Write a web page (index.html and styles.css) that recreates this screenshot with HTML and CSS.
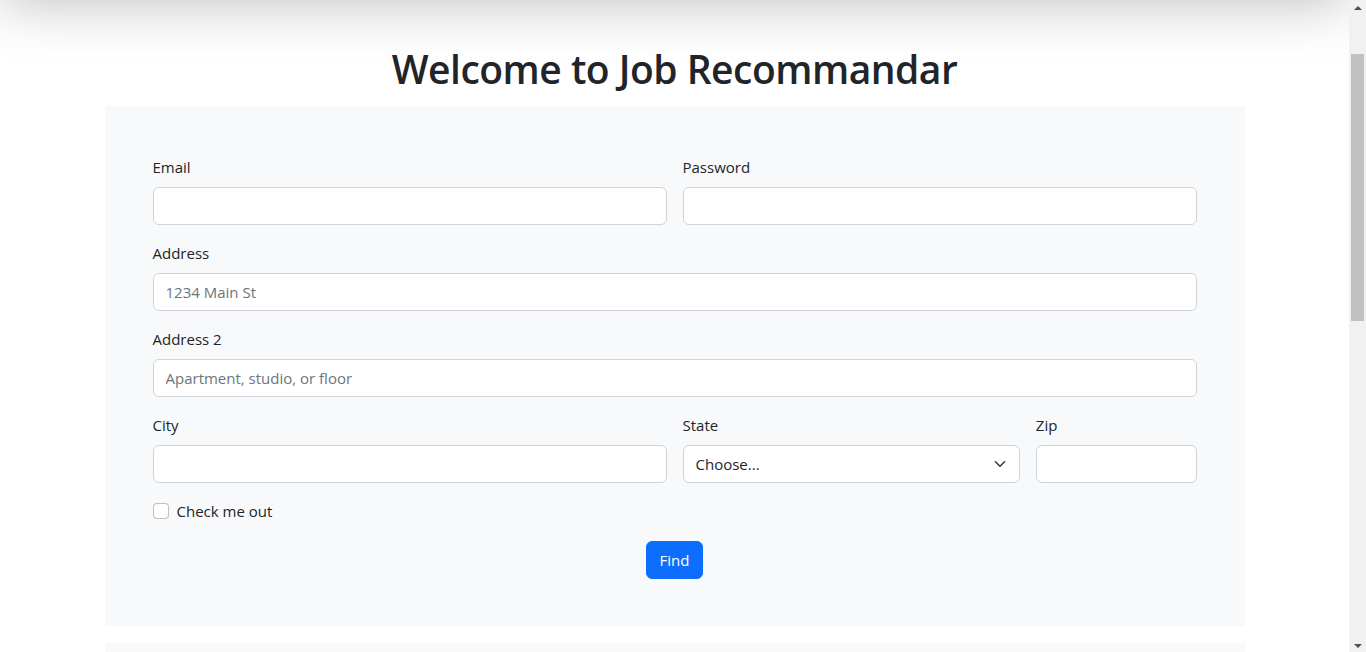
FILE: index.html
```html
<!DOCTYPE html>
<html lang="en">
<head>
<meta charset="utf-8">
<title>Job Recommandar</title>
<link rel="stylesheet" href="styles.css">
</head>
<body>
<nav class="topbar"></nav>
<main class="page">
  <h1 class="title">Welcome to Job Recommandar</h1>
  <section class="panel">
    <form class="form-grid">
      <div class="field span-6">
        <label class="label" for="email">Email</label>
        <input class="control" type="email" id="email">
      </div>
      <div class="field span-6">
        <label class="label" for="password">Password</label>
        <input class="control" type="password" id="password">
      </div>
      <div class="field span-12">
        <label class="label" for="address">Address</label>
        <input class="control" type="text" id="address" placeholder="1234 Main St">
      </div>
      <div class="field span-12">
        <label class="label" for="address2">Address 2</label>
        <input class="control" type="text" id="address2" placeholder="Apartment, studio, or floor">
      </div>
      <div class="field span-6">
        <label class="label" for="city">City</label>
        <input class="control" type="text" id="city">
      </div>
      <div class="field span-4">
        <label class="label" for="state">State</label>
        <div class="select-wrap">
          <select class="control select" id="state">
            <option selected>Choose...</option>
            <option>...</option>
          </select>
          <svg class="chevron" viewBox="0 0 16 16" width="16" height="12" aria-hidden="true"><path fill="none" stroke="#343a40" stroke-linecap="round" stroke-linejoin="round" stroke-width="2" d="m2 5 6 6 6-6"/></svg>
        </div>
      </div>
      <div class="field span-2">
        <label class="label" for="zip">Zip</label>
        <input class="control" type="text" id="zip">
      </div>
      <div class="field span-12">
        <div class="check">
          <input class="check-input" type="checkbox" id="check">
          <label class="check-label" for="check">Check me out</label>
        </div>
      </div>
      <div class="field span-12 actions">
        <button class="btn" type="submit">Find</button>
      </div>
    </form>
  </section>
  <section class="panel results"></section>
</main>
<div class="scrollbar" aria-hidden="true">
  <span class="sb-arrow sb-up"></span>
  <span class="sb-thumb"></span>
  <span class="sb-arrow sb-down"></span>
</div>
<script src="script.js"></script>
</body>
</html>
```
FILE: styles.css
```css
html {
  scroll-behavior: auto;
}
html::-webkit-scrollbar {
  width: 0;
}
body {
  margin: 0;
  padding: 0 17px 16px 0;
  background: #fff;
  color: #212529;
  font-family: "Open Sans", "Noto Sans", sans-serif;
  font-size: 15px;
  line-height: 1.6;
}
.topbar {
  position: relative;
  z-index: 2;
  height: 90px;
  background: #fff;
  box-shadow: 0 0 60px rgba(0, 0, 0, 0.28);
}
.page {
  width: 1140px;
  margin: 0 auto;
  padding-top: 45px;
}
.title {
  margin: 0 0 13px;
  text-align: center;
  font-size: 39px;
  font-weight: 600;
  line-height: 48px;
  letter-spacing: -0.5px;
}
.panel {
  background: #f8f9fa;
  padding: 49px 48px 47px;
}
.results {
  margin-top: 17px;
  height: 760px;
  box-sizing: border-box;
}
.form-grid {
  display: grid;
  grid-template-columns: repeat(12, 1fr);
  column-gap: 16px;
  row-gap: 16px;
}
.span-12 { grid-column: span 12; }
.span-6 { grid-column: span 6; }
.span-4 { grid-column: span 4; }
.span-2 { grid-column: span 2; }
.label {
  display: block;
  margin-bottom: 8px;
  font-size: 15px;
  line-height: 24px;
}
.control {
  display: block;
  box-sizing: border-box;
  width: 100%;
  height: 38px;
  margin: 0;
  padding: 6px 12px;
  font-family: inherit;
  font-size: 15px;
  line-height: 24px;
  color: #212529;
  background: #fff;
  border: 1px solid #ced4da;
  border-radius: 6px;
  outline: none;
}
.control::placeholder {
  color: #6c757d;
  opacity: 1;
}
.select-wrap {
  position: relative;
}
.select {
  appearance: none;
  -webkit-appearance: none;
  padding-right: 36px;
}
.chevron {
  position: absolute;
  right: 12px;
  top: 13px;
  pointer-events: none;
}
.check {
  display: flex;
  align-items: center;
  min-height: 24px;
  margin-bottom: 2px;
  gap: 8px;
}
.check-input {
  appearance: none;
  -webkit-appearance: none;
  box-sizing: border-box;
  width: 16px;
  height: 16px;
  margin: 0;
  background: #fff;
  border: 1px solid rgba(0, 0, 0, 0.25);
  border-radius: 4px;
}
.actions {
  display: flex;
  justify-content: center;
}
.btn {
  height: 38px;
  padding: 6px 13px;
  font-family: inherit;
  font-size: 15px;
  line-height: 24px;
  color: #fff;
  background: #0d6efd;
  border: 1px solid #0d6efd;
  border-radius: 6px;
}
.scrollbar {
  position: fixed;
  top: 0;
  right: 0;
  z-index: 10;
  width: 17px;
  height: 100vh;
  background: #f1f1f1;
}
.sb-arrow {
  position: absolute;
  left: 5px;
  width: 0;
  height: 0;
  border-left: 4px solid transparent;
  border-right: 4px solid transparent;
}
.sb-up {
  top: 6px;
  border-bottom: 4px solid #505050;
}
.sb-down {
  bottom: 4px;
  border-top: 4px solid #505050;
}
.sb-thumb {
  position: absolute;
  left: 2px;
  top: 54px;
  width: 13px;
  height: 267px;
  background: #c1c1c1;
}
```
FILE: script.js
```js
window.scrollTo(0, 90);
```
